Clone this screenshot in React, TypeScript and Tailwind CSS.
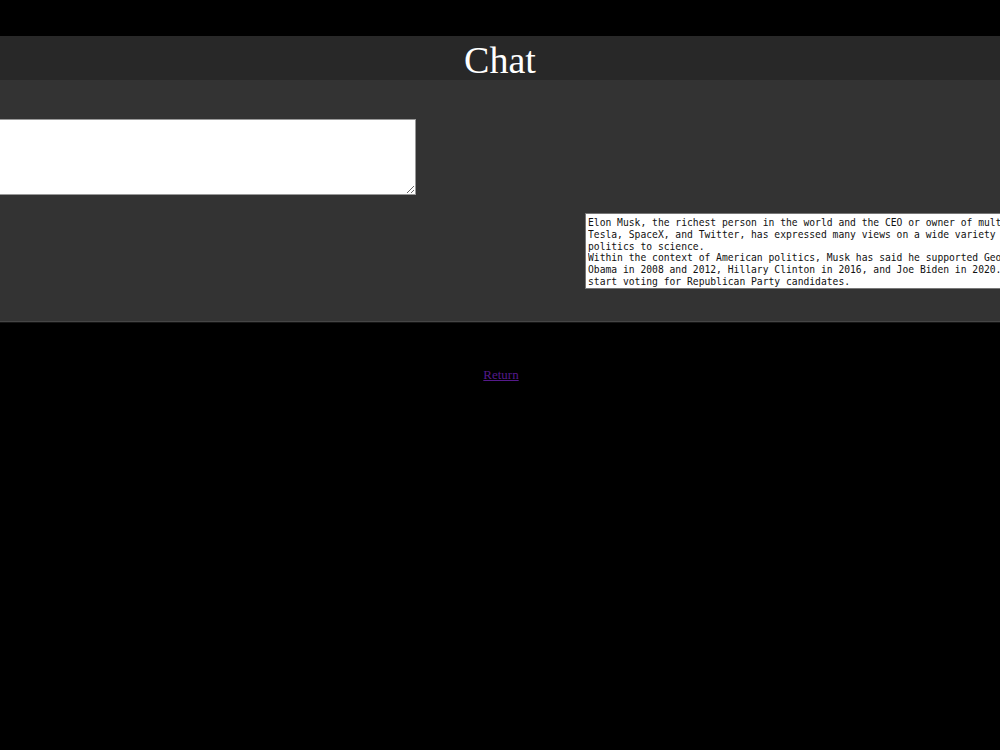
export default function App() {
  const output =
    'Elon Musk, the richest person in the world and the CEO or owner of multiple companies including\n' +
    'Tesla, SpaceX, and Twitter, has expressed many views on a wide variety of subjects, ranging from\n' +
    'politics to science.\n' +
    'Within the context of American politics, Musk has said he supported George W. Bush, Barack\n' +
    'Obama in 2008 and 2012, Hillary Clinton in 2016, and Joe Biden in 2020. In 2022 he said he would\n' +
    'start voting for Republican Party candidates.';

  return (
    <div className="min-h-[750px] bg-black font-['Liberation_Serif',serif] overflow-hidden">
      <div className="h-9" />
      <header className="h-11 bg-[#282828] flex items-center justify-center">
        <h1 className="text-[38px] leading-none text-white mt-1">Chat</h1>
      </header>

      <section className="bg-[#333333] h-[242px] border-b border-[#464646] overflow-hidden">
        <div className="flex items-start pt-[39px]">
          <textarea
            className="-ml-[30px] w-[446px] h-[76px] shrink-0 bg-white border border-[#999] resize-y"
            defaultValue=""
          />
          <div className="ml-[169px] mt-[94px] w-[560px] h-[76px] shrink-0 bg-white border border-[#777] px-[2px] pt-[3px]">
            <pre className="font-['DejaVu_Sans_Mono',monospace] text-[9.68px] leading-[11.8px] text-[#111] whitespace-pre overflow-hidden">
              {output}
            </pre>
          </div>
        </div>
      </section>
      <div className="h-px bg-[#161616]" />

      <div className="flex justify-center pt-[45px] pl-[2px]">
        <a href="#" className="text-[13px] text-[#551a8b] underline leading-none">
          Return
        </a>
      </div>
    </div>
  );
}
